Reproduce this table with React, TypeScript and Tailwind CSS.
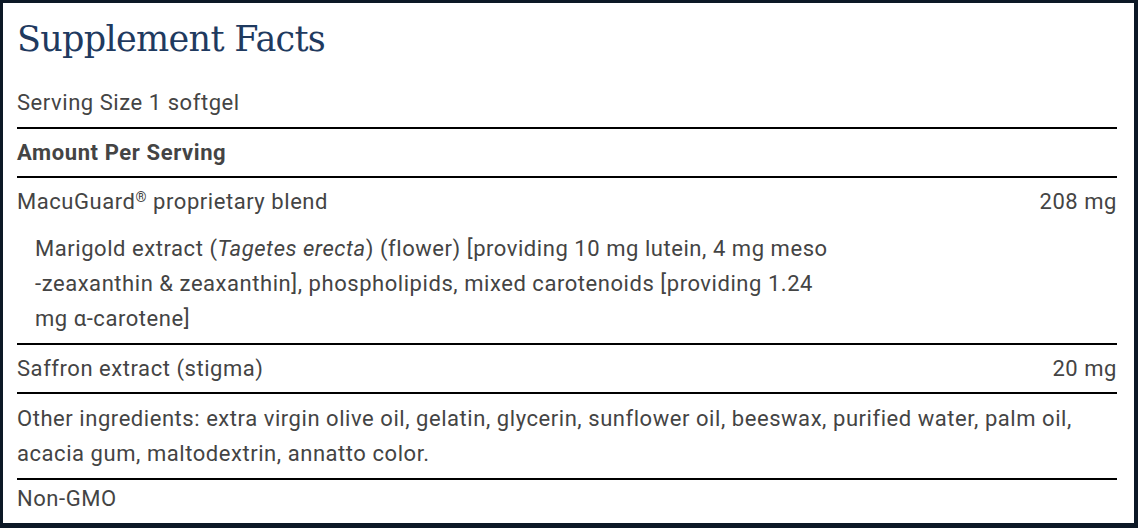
import React from 'react';

const Row = ({ children, className = '' }: { children: React.ReactNode; className?: string }) => (
  <div className={`border-t-2 border-black py-1.5 ${className}`}>{children}</div>
);

const App = () => {
  return (
    <div className="h-[528px] w-[1138px] bg-[#0c1826] pt-[3px] pl-[3px] pr-[4px] pb-[5px]">
      <div className="h-full bg-white pl-[14px] pr-[17px] text-[22px] leading-[35px] tracking-[0.55px] text-[#444444] font-['Roboto',sans-serif]">
        <h1 className="pt-[14px] text-[35px] leading-[44px] text-[#1f3a5f] font-['DejaVu_Serif','Liberation_Serif',serif] font-normal tracking-[-0.7px]">
          Supplement Facts
        </h1>

        <div className="pt-[24px] pb-[7px]">Serving Size 1 softgel</div>

        <Row>
          <div className="font-bold tracking-[0.6px]">Amount Per Serving</div>
        </Row>

        <Row>
          <div className="flex justify-between">
            <span>
              MacuGuard<sup className="text-[14px]">®</sup> proprietary blend
            </span>
            <span>208 mg</span>
          </div>
          <p className="mt-[12px] mb-px pl-[18px]">
            Marigold extract (<i>Tagetes erecta</i>) (flower) [providing 10 mg lutein, 4 mg meso
            <br />
            -zeaxanthin &amp; zeaxanthin], phospholipids, mixed carotenoids [providing 1.24
            <br />
            mg α-carotene]
          </p>
        </Row>

        <Row>
          <div className="flex justify-between">
            <span>Saffron extract (stigma)</span>
            <span>20 mg</span>
          </div>
        </Row>

        <Row className="py-[7px]">
          <p>
            Other ingredients: extra virgin olive oil, gelatin, glycerin, sunflower oil, beeswax, purified water, palm oil,
            <br />
            acacia gum, maltodextrin, annatto color.
          </p>
        </Row>

        <div className="border-t-2 border-black pt-px">Non-GMO</div>
      </div>
    </div>
  );
};

export default App;
